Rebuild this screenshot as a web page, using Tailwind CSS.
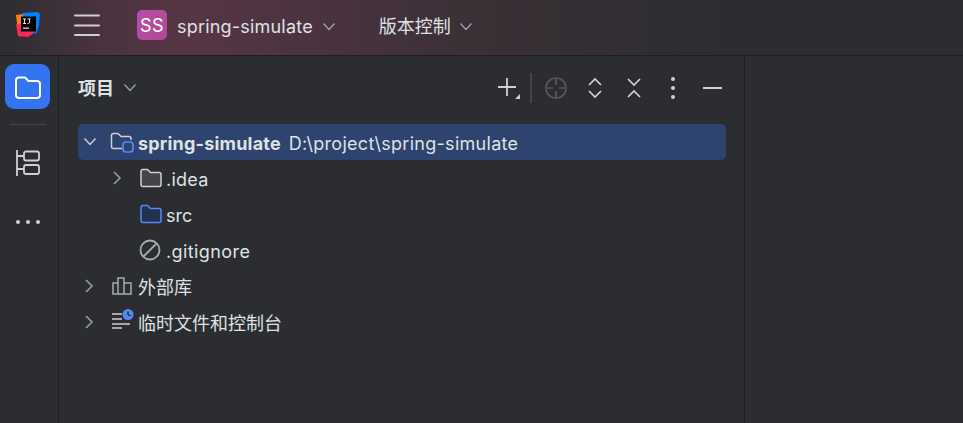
<!DOCTYPE html>
<html lang="zh">
<head>
<meta charset="utf-8">
<script src="https://cdn.jsdelivr.net/npm/@tailwindcss/browser@4"></script>
</head>
<body class="m-0 overflow-hidden bg-[#2b2d30]">
<div class="flex h-[423px] w-[963px] flex-col overflow-hidden bg-[#2b2d30] font-['Inter','Noto_Sans_CJK_SC',sans-serif] text-[18px] text-[#dfe1e5]">
  <!-- Title bar -->
  <header class="flex h-[56px] shrink-0 items-center border-b border-[#1e1f22] bg-[linear-gradient(90deg,#2b2d30_0px,#4a3340_100px,#573544_190px,#4c3340_300px,#3a3036_480px,#2b2d30_740px)]">
    <svg class="mb-[5px] ml-[16px] h-[26px] w-[24px]" viewBox="0 0 24 26">
      <path d="M0 3l8-1 4 14-8 9-2-6z" fill="#fc801d"/>
      <path d="M0 12l2 12 10 1 6-4-6-8z" fill="#fe2857"/>
      <path d="M6 1l16-1 2 2-1 12-3 8-6-3z" fill="#087cfa"/>
      <rect x="5" y="4.500" width="15" height="15" fill="#000"/>
      <path d="M7 7h3M8.500 7v4.500M7 11.500h3M11.500 7h3M13.500 7v3.500q0 1-2 1" fill="none" stroke="#fff" stroke-width="0.900"/>
      <rect x="7" y="15.500" width="6" height="1.300" fill="#ddd"/>
    </svg>
    <svg class="mb-[6px] ml-[34px] h-[24px] w-[26px]" viewBox="0 0 26 24" fill="none" stroke="#ced0d6" stroke-width="2" stroke-linecap="round">
      <path d="M1 2.500h24M1 12.500h24M1 22h24"/>
    </svg>
    <div class="mb-[5px] ml-[37px] flex h-[30px] w-[30px] items-center justify-center rounded-[5px] bg-[linear-gradient(135deg,#b44fa8,#b04a95)] text-[18px] tracking-[0.5px] text-white">SS</div>
    <span class="mb-[2px] ml-[10px] whitespace-nowrap tracking-[0.2px]">spring-simulate</span>
    <svg class="mb-[2px] ml-[9px] h-[12px] w-[14px]" viewBox="0 0 14 12" fill="none" stroke="#9da0a8" stroke-width="1.300"><path d="M1.500 2.500l5.500 6 5.500-6"/></svg>
    <span class="mb-[2px] ml-[43px] whitespace-nowrap">版本控制</span>
    <svg class="mb-[2px] ml-[8px] h-[12px] w-[14px]" viewBox="0 0 14 12" fill="none" stroke="#9da0a8" stroke-width="1.300"><path d="M1.500 2.500l5.500 6 5.500-6"/></svg>
  </header>

  <div class="flex min-h-0 flex-1">
    <!-- Left tool strip -->
    <aside class="flex w-[59px] shrink-0 flex-col items-center border-r border-[#1e1f22] pt-[8px] pr-[3px]">
      <div class="flex h-[45px] w-[45px] items-center justify-center rounded-[9px] bg-[#3574f0]">
        <svg class="h-[28px] w-[28px]" viewBox="0 0 28 28" fill="none" stroke="#fff" stroke-width="2" stroke-linejoin="round">
          <path d="M2 7.500q0-3 3-3h6l3.500 3.500h8.500q3 0 3 3v11q0 3-3 3h-18q-3 0-3-3z"/>
        </svg>
      </div>
      <div class="mt-[15px] h-px w-[36px] bg-[#43454a]"></div>
      <svg class="mt-[24px] h-[28px] w-[26px]" viewBox="0 0 26 28" fill="none" stroke="#ced0d6" stroke-width="1.800">
        <path d="M2 1v26M2 7h7M2 20h7"/>
        <rect x="9" y="2.500" width="15" height="9" rx="2"/>
        <rect x="9" y="16" width="15" height="9" rx="2"/>
      </svg>
      <div class="mt-[43px] flex gap-[6px]">
        <span class="h-[4px] w-[4px] rounded-full bg-[#ced0d6]"></span>
        <span class="h-[4px] w-[4px] rounded-full bg-[#ced0d6]"></span>
        <span class="h-[4px] w-[4px] rounded-full bg-[#ced0d6]"></span>
      </div>
    </aside>

    <!-- Project panel -->
    <main class="w-[686px] shrink-0 border-r border-[#1e1f22]">
      <div class="flex h-[68px] items-center pb-[4px]">
        <span class="ml-[19px] text-[18px] font-bold">项目</span>
        <svg class="ml-[9px] h-[12px] w-[14px]" viewBox="0 0 14 12" fill="none" stroke="#9da0a8" stroke-width="1.300"><path d="M1.500 2.500l5.500 6 5.500-6"/></svg>
        <svg class="ml-[360px] h-[24px] w-[24px]" viewBox="0 0 24 24" fill="none" stroke="#ced0d6" stroke-width="1.800">
          <path d="M10 2v18M1 11h18"/>
          <path d="M23 18v5h-5z" fill="#ced0d6" stroke="none"/>
        </svg>
        <div class="ml-[9px] h-[30px] w-[2px] bg-[#43454a]"></div>
        <svg class="ml-[13px] h-[22px] w-[22px]" viewBox="0 0 22 22" fill="none" stroke="#55575c" stroke-width="1.700">
          <circle cx="11" cy="11" r="10"/>
          <path d="M11 1v7M11 14v7M1 11h7M14 11h7"/>
        </svg>
        <svg class="ml-[20px] h-[22px] w-[16px]" viewBox="0 0 16 22" fill="none" stroke="#ced0d6" stroke-width="1.700">
          <path d="M2 8l6-6 6 6M2 14l6 6 6-6"/>
        </svg>
        <svg class="ml-[23px] h-[22px] w-[16px]" viewBox="0 0 16 22" fill="none" stroke="#ced0d6" stroke-width="1.700">
          <path d="M2 2l6 6 6-6M2 20l6-6 6 6"/>
        </svg>
        <div class="ml-[29px] flex flex-col gap-[5px]">
          <span class="h-[4px] w-[4px] rounded-full bg-[#ced0d6]"></span>
          <span class="h-[4px] w-[4px] rounded-full bg-[#ced0d6]"></span>
          <span class="h-[4px] w-[4px] rounded-full bg-[#ced0d6]"></span>
        </div>
        <div class="ml-[28px] h-[2px] w-[19px] bg-[#ced0d6]"></div>
      </div>

      <ul class="ml-[19px] w-[648px] text-[18px]">
        <li class="flex h-[36px] items-center rounded-[5px] bg-[#2e436e]">
          <svg class="ml-[5px] h-[12px] w-[14px]" viewBox="0 0 14 12" fill="none" stroke="#ced0d6" stroke-width="1.500"><path d="M1.500 2.500l5.500 6 5.500-6"/></svg>
          <svg class="ml-[13px] h-[24px] w-[24px]" viewBox="0 0 24 24" fill="none">
            <path d="M12 18.500h-8.500q-2 0-2-2v-11q0-2 2-2h4.500l3 3h8q2 0 2 2v1.500" stroke="#ced0d6" stroke-width="1.500"/>
            <rect x="13" y="12" width="10" height="10" rx="3" stroke="#548af7" stroke-width="1.700"/>
          </svg>
          <span class="ml-[4px] pt-[2px] font-bold tracking-[0.2px]">spring-simulate</span>
          <span class="ml-[8px] pt-[2px] tracking-[0.29px] text-[#dfe1e5]">D:\project\spring-simulate</span>
        </li>
        <li class="flex h-[36px] items-center">
          <svg class="ml-[33px] h-[14px] w-[12px]" viewBox="0 0 12 14" fill="none" stroke="#9da0a8" stroke-width="1.500"><path d="M3 1l6 6-6 6"/></svg>
          <svg class="ml-[17px] h-[20px] w-[22px]" viewBox="0 0 22 20" fill="#43454a" stroke="#ced0d6" stroke-width="1.500">
            <path d="M1 3.500q0-2 2-2h4.500l3 3h8.500q2 0 2 2v10q0 2-2 2h-16q-2 0-2-2z"/>
          </svg>
          <span class="ml-[4px] pt-[2px] tracking-[0.25px]">.idea</span>
        </li>
        <li class="flex h-[36px] items-center">
          <svg class="ml-[62px] h-[20px] w-[22px]" viewBox="0 0 22 20" fill="#25324d" stroke="#548af7" stroke-width="1.500">
            <path d="M1 3.500q0-2 2-2h4.500l3 3h8.500q2 0 2 2v10q0 2-2 2h-16q-2 0-2-2z"/>
          </svg>
          <span class="ml-[4px] pt-[2px]">src</span>
        </li>
        <li class="flex h-[36px] items-center">
          <svg class="ml-[61px] h-[22px] w-[22px]" viewBox="0 0 22 22" fill="none" stroke="#a8abb0" stroke-width="1.800">
            <circle cx="11" cy="11" r="9.500"/>
            <path d="M4.500 17.500l13-13"/>
          </svg>
          <span class="ml-[5px] pt-[2px] tracking-[0.4px]">.gitignore</span>
        </li>
        <li class="flex h-[36px] items-center">
          <svg class="ml-[5px] h-[14px] w-[12px]" viewBox="0 0 12 14" fill="none" stroke="#9da0a8" stroke-width="1.500"><path d="M3 1l6 6-6 6"/></svg>
          <svg class="ml-[17px] h-[20px] w-[20px]" viewBox="0 0 20 20" fill="none" stroke="#a8abb0" stroke-width="1.500">
            <path d="M1 18V7h5v11zM6 18V2h6v16zM12 18V7h7v11z"/>
          </svg>
          <span class="ml-[6px] pt-[2px]">外部库</span>
        </li>
        <li class="flex h-[36px] items-center">
          <svg class="ml-[5px] h-[14px] w-[12px]" viewBox="0 0 12 14" fill="none" stroke="#9da0a8" stroke-width="1.500"><path d="M3 1l6 6-6 6"/></svg>
          <svg class="mb-[2px] ml-[16px] h-[24px] w-[24px]" viewBox="0 0 24 24" fill="none">
            <path d="M1 5h10M1 10h10M1 15h18M1 19h10" stroke="#ced0d6" stroke-width="1.500"/>
            <circle cx="17" cy="5.500" r="5.500" fill="#548af7"/>
            <path d="M17 2.500v3l2.500 1.500" stroke="#1e1f22" stroke-width="1.300"/>
          </svg>
          <span class="ml-[3px] pt-[2px]">临时文件和控制台</span>
        </li>
      </ul>
    </main>
    <div class="flex-1"></div>
  </div>
</div>
</body>
</html>
